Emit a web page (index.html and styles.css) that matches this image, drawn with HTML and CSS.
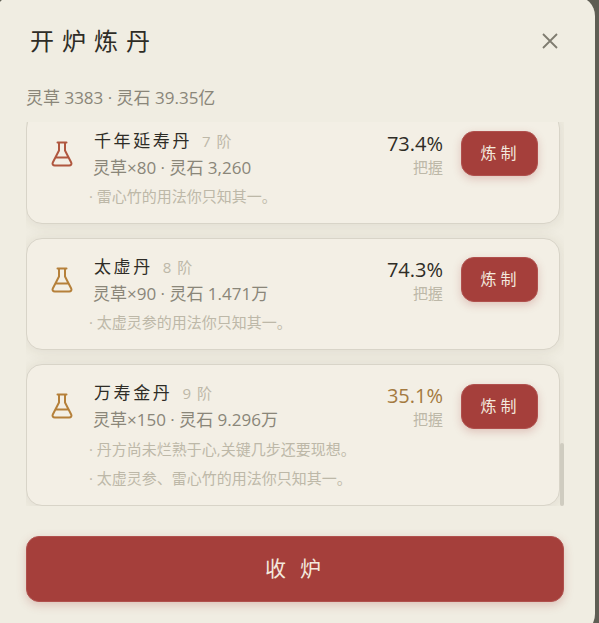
FILE: index.html
```
<!DOCTYPE html>
<html lang="zh-CN">
<head>
<meta charset="utf-8">
<title>开炉炼丹</title>
<link rel="stylesheet" href="styles.css">
</head>
<body>
<div class="modal">
  <header class="head">
    <h1 class="title">开炉炼丹</h1>
    <svg class="close" viewBox="0 0 16 16" width="16" height="16"><path d="M1 1L15 15M15 1L1 15"/></svg>
  </header>
  <div class="status">灵草 3383 · 灵石 39.35亿</div>
  <div class="scroller">
    <div class="list">
      <article class="card first">
        <svg class="flask red" viewBox="0 0 22 26"><path d="M6.5 1.5h9M8 1.5v8L1.8 21.5c-.8 1.7.2 3 2 3h14.400c1.800 0 2.800-1.300 2-3L14 9.500v-8M4.700 16.500h12.600"/></svg>
        <div class="info">
          <div class="nameline"><span class="name">千年延寿丹</span><span class="level">7 阶</span></div>
          <div class="cost">灵草×80 · 灵石 3,260</div>
          <div class="note">· 雷心竹的用法你只知其一。</div>
        </div>
        <div class="odds"><div class="pct">73.4%</div><div class="label">把握</div></div>
        <button class="make">炼制</button>
      </article>
      <article class="card">
        <svg class="flask gold" viewBox="0 0 22 26"><path d="M6.5 1.5h9M8 1.5v8L1.8 21.5c-.8 1.7.2 3 2 3h14.400c1.800 0 2.800-1.300 2-3L14 9.500v-8M4.700 16.500h12.600"/></svg>
        <div class="info">
          <div class="nameline"><span class="name">太虚丹</span><span class="level">8 阶</span></div>
          <div class="cost">灵草×90 · 灵石 1.471万</div>
          <div class="note">· 太虚灵参的用法你只知其一。</div>
        </div>
        <div class="odds"><div class="pct">74.3%</div><div class="label">把握</div></div>
        <button class="make">炼制</button>
      </article>
      <article class="card last">
        <svg class="flask gold" viewBox="0 0 22 26"><path d="M6.5 1.5h9M8 1.5v8L1.8 21.5c-.8 1.7.2 3 2 3h14.400c1.800 0 2.800-1.300 2-3L14 9.500v-8M4.700 16.500h12.600"/></svg>
        <div class="info">
          <div class="nameline"><span class="name">万寿金丹</span><span class="level">9 阶</span></div>
          <div class="cost">灵草×150 · 灵石 9.296万</div>
          <div class="note">· 丹方尚未烂熟于心,关键几步还要现想。</div>
          <div class="note">· 太虚灵参、雷心竹的用法你只知其一。</div>
        </div>
        <div class="odds"><div class="pct warn">35.1%</div><div class="label">把握</div></div>
        <button class="make">炼制</button>
      </article>
    </div>
    <div class="thumb"></div>
  </div>
  <button class="furnace">收炉</button>
</div>
</body>
</html>
```
FILE: styles.css
```
* { box-sizing: border-box; }
html, body { margin: 0; height: 100%; overflow: hidden; }
body {
  background: #5f5e54;
  font-family: "Open Sans", "Noto Sans CJK SC", sans-serif;
}
.modal {
  width: 601px;
  height: 638px;
  margin: -4px 0 0 -6px;
  padding: 4px 0 0 32px;
  background: #f0ede2;
  border-radius: 20px;
}
.head {
  height: 76px;
  display: flex;
  align-items: center;
  justify-content: space-between;
  padding-right: 37px;
  padding-top: 6px;
}
.title {
  margin: 0 0 4px 4px;
  font-family: "Noto Sans CJK SC", serif;
  font-size: 24px;
  font-weight: 400;
  letter-spacing: 8px;
  color: #2e2c26;
}
.close { fill: none; stroke: #7f7c70; stroke-width: 1.8; }
.status {
  height: 46px;
  padding-top: 11px;
  font-size: 17px;
  line-height: 22px;
  color: #8a8679;
}
.scroller {
  position: relative;
  width: 538px;
  height: 384px;
  overflow: hidden;
}
.list {
  width: 534px;
  display: flex;
  flex-direction: column;
  gap: 14px;
}
.card {
  flex: none;
  display: flex;
  align-items: flex-start;
  padding: 18px 21px 12px 24px;
  background: #f3efe5;
  border: 1px solid #d8d4c8;
  border-radius: 16px;
  box-shadow: 0 1px 14px rgba(70, 60, 30, .1);
}
.first { margin-top: -10px; }
.last { padding-bottom: 12px; }
.flask {
  flex: none;
  width: 22px;
  height: 26px;
  margin-top: 10px;
  fill: none;
  stroke-width: 2;
  stroke-linejoin: round;
  stroke-linecap: round;
}
.red { stroke: #b0573f; }
.gold { stroke: #b5803a; }
.info { flex: 1; min-width: 0; margin: -2px 0 0 20px; }
.nameline { display: flex; align-items: baseline; height: 22px; line-height: 22px; padding-left: 1px; }
.name {
  font-family: "Noto Sans CJK SC", serif;
  font-size: 17px;
  letter-spacing: 2.6px;
  color: #2e2c26;
}
.level { margin-left: 10px; font-size: 15px; letter-spacing: 1px; color: #bdb8a8; }
.cost { height: 28px; margin-top: 3px; font-size: 17px; line-height: 28px; color: #8a8679; }
.note {
  margin-left: -4px;
  height: 29px;
  font-size: 15px;
  line-height: 29px;
  color: #bdb8a8;
  white-space: nowrap;
}
.last .cost + .note { margin-top: 1px; }
.odds { flex: none; width: 80px; margin-right: 18px; text-align: right; }
.pct { height: 26px; font-size: 20px; line-height: 26px; color: #2e2c26; }
.warn { color: #a47a40; }
.label { height: 20px; font-size: 15px; line-height: 20px; color: #bdb8a8; }
.make {
  flex: none;
  width: 77px;
  height: 45px;
  padding: 0 0 4px 2px;
  border: 1px solid #b0504d;
  border-radius: 13px;
  background: #a53f3b;
  box-shadow: 0 3px 8px rgba(165, 63, 59, .25);
  font-family: "Noto Sans CJK SC", serif;
  font-size: 16px;
  letter-spacing: 4px;
  color: #f3e9de;
}
.last .make { margin-top: 1px; }
.thumb {
  position: absolute;
  right: 0;
  top: 321px;
  width: 4px;
  height: 63px;
  border-radius: 2px;
  background: #cfccc0;
}
.furnace {
  display: block;
  width: 538px;
  height: 66px;
  margin-top: 30px;
  padding: 0 0 4px 10px;
  border: 1px solid #b0504d;
  border-radius: 13px;
  background: #a53f3b;
  box-shadow: 0 3px 10px rgba(165, 63, 59, .25);
  font-family: "Noto Sans CJK SC", serif;
  font-size: 21px;
  letter-spacing: 14px;
  color: #f3e9de;
}
```
